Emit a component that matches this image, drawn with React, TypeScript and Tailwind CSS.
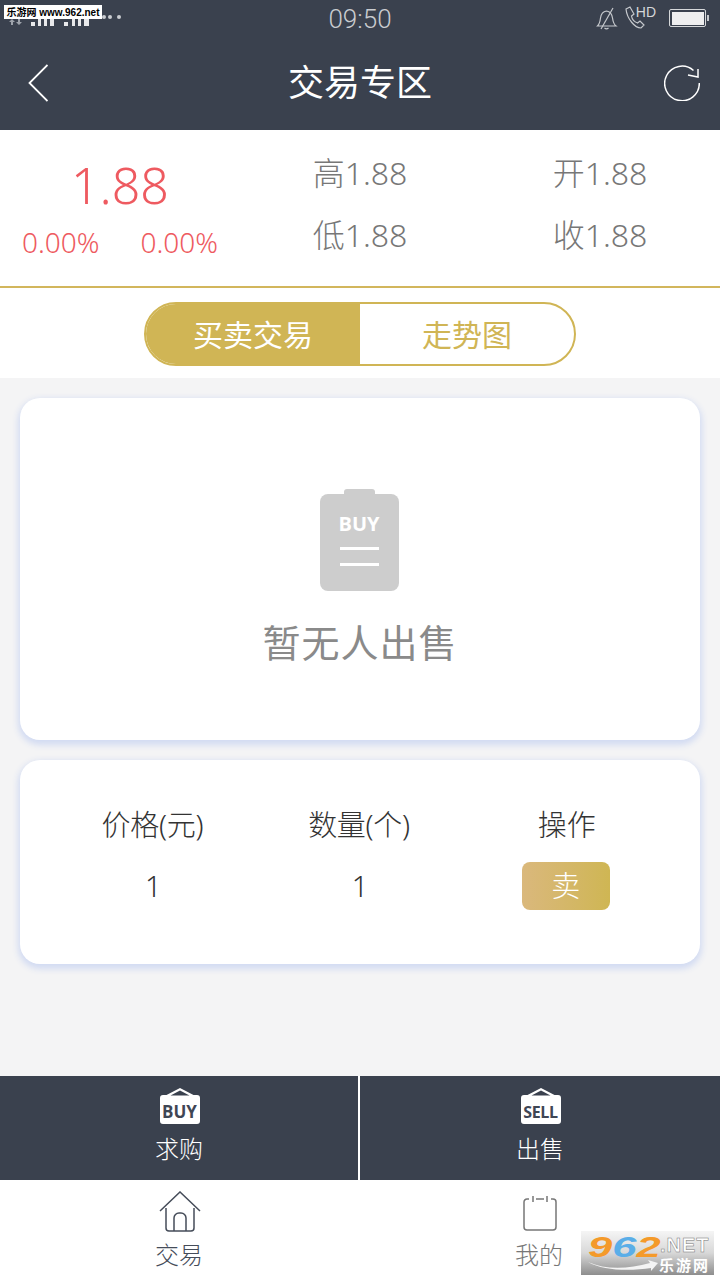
import React from 'react';

const cjk = { fontFamily: '"Noto Sans", "Noto Sans CJK SC", sans-serif' };

function SignalBars() {
    return (
        <svg width="124" height="28" viewBox="0 0 124 28" className="block">
            <g fill="#9ea3ab">
                <path d="M12 19l3 3h-2v3h-2v-3H9zM19 25l-3-3h2v-3h2v3h2z" />
            </g>
            <g fill="#e8e9eb">
                <rect x="31" y="22" width="4" height="4" />
                <rect x="38" y="12" width="3" height="14" />
                <rect x="44" y="12" width="3" height="14" />
                <rect x="50" y="12" width="4" height="14" />
                <rect x="64" y="22" width="4" height="4" />
                <rect x="72" y="12" width="3" height="14" />
                <rect x="78" y="12" width="3" height="14" />
                <rect x="84" y="12" width="5" height="14" />
            </g>
            <circle cx="104" cy="17" r="2" fill="#c9ccd0" />
            <circle cx="110" cy="17" r="2" fill="#c9ccd0" />
            <circle cx="119" cy="17" r="2" fill="#c9ccd0" />
        </svg>
    );
}

function StatusIcons() {
    return (
        <div className="flex items-start">
            <svg width="22" height="24" viewBox="0 0 22 24" fill="none" stroke="#c6c9cd" strokeWidth="1.2" className="mt-[6px]">
                <path d="M1.500 20c2-2 2.500-4 3-8 .5-4 2.500-6.500 6-7 3.500.5 5.500 3 6 7 .5 3.500 1 6 3.500 8z" />
                <path d="M8.500 22c1 .8 3 .8 4 0" />
                <path d="M5 23L17 2" />
            </svg>
            <svg width="22" height="24" viewBox="0 0 22 24" fill="none" stroke="#c6c9cd" strokeWidth="1.2" className="ml-[6px] mt-[6px]">
                <path d="M2 3l4-2 4 7-2.500 2c.5 3 3 6 6 7l2.500-2 4 4-3 3c-6 0-14-9-15-19z" />
            </svg>
            <span className="-ml-[10px] mt-[4px] text-[14px] leading-[16px] text-[#d4d6d9]" style={{ fontFamily: '"Liberation Sans", sans-serif' }}>HD</span>
            <div className="ml-[13px] mt-[9px] flex items-center">
                <div className="h-[18px] w-[37px] rounded-[2px] border border-[#d6d8da] p-[1.500px]">
                    <div className="h-full w-[32px] bg-[#eeeeef]" />
                </div>
                <div className="ml-[1px] h-[6px] w-[2px] bg-[#c6c9cd]" />
            </div>
        </div>
    );
}

function BagIcon({ label, small }: { label: string; small?: boolean }) {
    return (
        <div className="relative ml-[1px] h-[36px] w-[40px]">
            <svg width="40" height="36" viewBox="0 0 40 36" className="absolute left-0 top-0">
                <path d="M3 7h3.500L20 0l13.500 7H37a3 3 0 0 1 3 3v23a3 3 0 0 1-3 3H3a3 3 0 0 1-3-3V10a3 3 0 0 1 3-3z" fill="#fff" />
                <path d="M10.500 7.500L20 2.500l9.500 5z" fill="#3a414e" />
            </svg>
            <span
                className={`absolute inset-x-0 top-[14px] text-center font-bold leading-[20px] text-[#3f4654] ${small ? 'text-[16px] tracking-[-0.3px]' : 'text-[17px]'}`}
                style={{ fontFamily: '"Open Sans", sans-serif' }}
            >
                {label}
            </span>
        </div>
    );
}

function App() {
    return (
        <div className="relative flex h-[1280px] w-[720px] flex-col overflow-hidden bg-[#f4f4f5]" style={cjk}>
            {/* 상단 헤더 */}
            <header className="h-[130px] shrink-0 bg-[#3a414e]">
                <div className="relative flex h-[40px] items-start justify-between pr-[11px]">
                    <SignalBars />
                    <span className="absolute inset-x-0 top-[2px] text-center text-[26px] leading-[34px] text-[#c9ccd0]" style={{ fontFamily: '"Roboto", sans-serif', fontWeight: 300 }}>09:50</span>
                    <StatusIcons />
                </div>
                <div className="flex h-[90px] items-center justify-between pb-[4px] pl-[28px] pr-[20px]">
                    <div className="w-[28px]">
                        <svg width="20" height="38" viewBox="0 0 20 38" fill="none" stroke="#fff" strokeWidth="1.800">
                            <path d="M19.500 1L1.500 19l18 18" />
                        </svg>
                    </div>
                    <h1 className="text-[36px] font-normal leading-[44px] text-white">交易专区</h1>
                    <svg width="36" height="36" viewBox="0 0 36 36" fill="none" stroke="#fff" strokeWidth="1.500">
                        <path d="M29.500 5.500A17.300 17.300 0 1 0 35.300 18" />
                        <path d="M24 10l10 2V4" />
                    </svg>
                </div>
            </header>

            {/* 시세 */}
            <section className="flex h-[158px] shrink-0 border-b-2 border-[#d2b65c] bg-white">
                <div className="w-[240px] pt-[22px] text-center text-[#ee5a60]">
                    <div className="text-[50px] leading-[66px]" style={{ fontWeight: 300 }}>1.88</div>
                    <div className="mt-[5px] flex justify-center gap-[41px] text-[28px] leading-[38px]" style={{ fontWeight: 300 }}>
                        <span>0.00%</span>
                        <span>0.00%</span>
                    </div>
                </div>
                <div className="flex w-[240px] flex-col items-center pt-[19px] text-[32px] leading-[48px] text-[#777]" style={{ fontWeight: 300 }}>
                    <span>高1.88</span>
                    <span className="mt-[14px]">低1.88</span>
                </div>
                <div className="flex w-[240px] flex-col items-center pt-[19px] text-[32px] leading-[48px] text-[#777]" style={{ fontWeight: 300 }}>
                    <span>开1.88</span>
                    <span className="mt-[14px]">收1.88</span>
                </div>
            </section>

            {/* 탭 */}
            <section className="flex h-[90px] shrink-0 justify-center bg-white pt-[14px]">
                <div className="flex h-[64px] w-[432px] overflow-hidden rounded-full border-2 border-[#d0b555]">
                    <div className="flex w-[214px] items-center justify-center bg-[#d0b555] text-[30px] text-white">买卖交易</div>
                    <div className="flex flex-1 items-center justify-center text-[30px] text-[#d0b555]">走势图</div>
                </div>
            </section>

            {/* 본문 */}
            <main className="flex flex-1 flex-col gap-[20px] px-[20px] pt-[20px]">
                <div className="flex h-[342px] flex-col items-center rounded-[20px] bg-white pt-[91px] shadow-[0_3px_6px_2px_#d2dbf2]">
                    <div className="relative -ml-[2px] h-[102px] w-[79px]">
                        <div className="absolute left-[24px] top-0 h-[8px] w-[31px] rounded-t-[3px] bg-[#cdcdcd]" />
                        <div className="absolute inset-x-0 bottom-0 top-[5px] flex flex-col items-center rounded-[8px] bg-[#cdcdcd] pt-[16px]">
                            <span className="text-[20px] font-bold leading-[28px] text-white" style={{ fontFamily: '"Open Sans", sans-serif' }}>BUY</span>
                            <div className="mt-[9px] h-[3px] w-[39px] bg-white" />
                            <div className="mt-[13px] h-[3px] w-[39px] bg-white" />
                        </div>
                    </div>
                    <p className="mt-[24px] text-[38px] leading-[54px] tracking-[1px] text-[#8a8a8a]">暂无人出售</p>
                </div>

                <div className="grid h-[204px] grid-cols-3 rounded-[20px] bg-white px-[30px] pt-[44px] shadow-[0_3px_6px_2px_#d2dbf2]">
                    <div className="flex flex-col items-center text-[29px] leading-[42px] text-[#333]" style={{ fontWeight: 300 }}>
                        <span className="-ml-[2px] tracking-[-0.3px]">价格(元)</span>
                        <span className="mt-[19px]">1</span>
                    </div>
                    <div className="flex flex-col items-center text-[29px] leading-[42px] text-[#333]" style={{ fontWeight: 300 }}>
                        <span className="-ml-[2px] tracking-[-0.3px]">数量(个)</span>
                        <span className="mt-[19px]">1</span>
                    </div>
                    <div className="flex flex-col items-center text-[29px] leading-[42px] text-[#333]" style={{ fontWeight: 300 }}>
                        <span>操作</span>
                        <button className="mt-[16px] -ml-[2px] h-[48px] w-[88px] rounded-[8px] bg-gradient-to-r from-[#dab87c] to-[#cfb653] text-[29px] leading-[44px] text-white">卖</button>
                    </div>
                </div>
            </main>

            {/* 구매 / 판매 */}
            <section className="flex h-[104px] shrink-0 bg-[#3a414e] text-[24px] text-white" style={{ fontWeight: 300 }}>
                <div className="flex w-[358px] flex-col items-center pt-[12px]">
                    <BagIcon label="BUY" />
                    <span className="mt-[7px] leading-[36px]">求购</span>
                </div>
                <div className="w-[2px] bg-white" />
                <div className="flex flex-1 flex-col items-center pt-[12px]">
                    <BagIcon label="SELL" small />
                    <span className="mt-[7px] leading-[36px]">出售</span>
                </div>
            </section>

            {/* 하단 탭바 */}
            <nav className="flex h-[100px] shrink-0 bg-white text-[24px] leading-[36px]" style={{ fontWeight: 300 }}>
                <div className="flex w-[358px] flex-col items-center pt-[11px] text-[#454c59]">
                    <svg width="42" height="42" viewBox="0 0 42 42" fill="none" stroke="#454c59" strokeWidth="1.500" className="ml-[1px]">
                        <path d="M1 20L21 1l20 19" />
                        <path d="M7 17v20a3 3 0 0 0 3 3h22a3 3 0 0 0 3-3V17" />
                        <path d="M15 40V27a5 5 0 0 1 5-5h2a5 5 0 0 1 5 5v13" />
                    </svg>
                    <span className="mt-[4px]">交易</span>
                </div>
                <div className="flex flex-1 flex-col items-center pt-[15px] text-[#777]">
                    <svg width="34" height="36" viewBox="0 0 34 36" fill="none" stroke="#777" strokeWidth="1.500" className="ml-[1px]">
                        <path d="M6 4H4a3 3 0 0 0-3 3v25a3 3 0 0 0 3 3h26a3 3 0 0 0 3-3V7a3 3 0 0 0-3-3h-2" />
                        <path d="M10 1v6M24 1v6M13 4h8" />
                    </svg>
                    <span className="mt-[6px]">我的</span>
                </div>
            </nav>

            {/* 워터마크 */}
            <div className="absolute left-[4px] top-[5px] flex h-[14px] w-[98px] items-center justify-center bg-white text-[10px] font-bold leading-[13px] text-black" style={{ fontFamily: '"Liberation Sans", "Noto Sans CJK SC", sans-serif' }}>
                乐游网 www.962.net
            </div>
            <div className="absolute bottom-[5px] right-[6px] h-[44px] w-[133px] bg-gradient-to-b from-[#f5f5f5] via-[#d8d8d8] to-[#8e8e8e]">
                <div className="absolute left-[7px] top-[0px] flex origin-left scale-x-[1.45] text-[30px] font-bold italic leading-[32px]" style={{ fontFamily: '"Liberation Sans", sans-serif' }}>
                    <span className="text-[#f49a2a]">9</span>
                    <span className="text-[#5aaee8]">6</span>
                    <span className="text-[#f49a2a]">2</span>
                </div>
                <span className="absolute left-[79px] top-[4px] text-[20px] font-bold leading-[21px] tracking-[1px] text-white" style={{ fontFamily: '"Liberation Sans", sans-serif', WebkitTextStroke: '0.500px #777' }}>.NET</span>
                <span className="absolute left-[78px] top-[25px] text-[15px] font-bold leading-[18px] tracking-[2px] text-white" style={{ fontFamily: '"Noto Sans CJK SC", sans-serif' }}>乐游网</span>
                <svg width="72" height="14" viewBox="0 0 72 14" className="absolute bottom-[2px] left-[6px]">
                    <path d="M1 3c18 8 40 7 62 1l-2-3 10 3-7 8 0-3C44 12 16 12 1 3z" fill="#f4f4f4" />
                </svg>
            </div>
        </div>
    );
}

export default App;
